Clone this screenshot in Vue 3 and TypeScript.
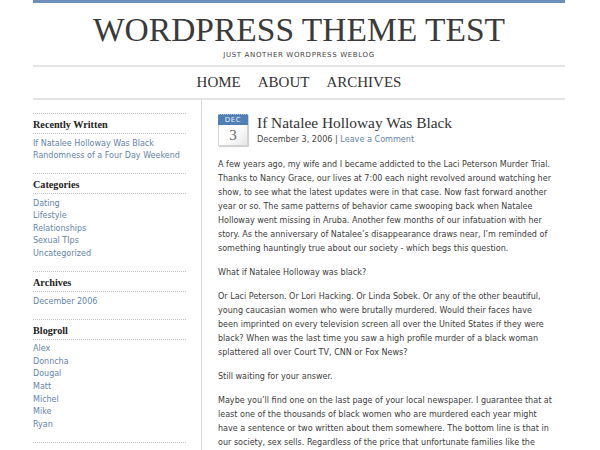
<script setup lang="ts">
interface Widget {
  title: string
  links: string[]
}

const nav = ['Home', 'About', 'Archives']

const widgets: Widget[] = [
  { title: 'Recently Written', links: ['If Natalee Holloway Was Black', 'Randomness of a Four Day Weekend'] },
  { title: 'Categories', links: ['Dating', 'Lifestyle', 'Relationships', 'Sexual TIps', 'Uncategorized'] },
  { title: 'Archives', links: ['December 2006'] },
  { title: 'Blogroll', links: ['Alex', 'Donncha', 'Dougal', 'Matt', 'Michel', 'Mike', 'Ryan'] },
  { title: 'Admin', links: ['Site Admin'] }
]

const paragraphs = [
  'A few years ago, my wife and I became addicted to the Laci Peterson Murder Trial. Thanks to Nancy Grace, our lives at 7:00 each night revolved around watching her show, to see what the latest updates were in that case. Now fast forward another year or so. The same patterns of behavior came swooping back when Natalee Holloway went missing in Aruba. Another few months of our infatuation with her story. As the anniversary of Natalee’s disappearance draws near, I’m reminded of something hauntingly true about our society - which begs this question.',
  'What if Natalee Holloway was black?',
  'Or Laci Peterson. Or Lori Hacking. Or Linda Sobek. Or any of the other beautiful, young caucasian women who were brutally murdered. Would their faces have been imprinted on every television screen all over the United States if they were black? When was the last time you saw a high profile murder of a black woman splattered all over Court TV, CNN or Fox News?',
  'Still waiting for your answer.',
  'Maybe you’ll find one on the last page of your local newspaper. I guarantee that at least one of the thousands of black women who are murdered each year might have a sentence or two written about them somewhere. The bottom line is that in our society, sex sells. Regardless of the price that unfortunate families like the'
]
</script>

<template>
  <div class="page">
    <header class="masthead">
      <h1>Wordpress Theme Test</h1>
      <p class="tagline">Just another WordPress weblog</p>
    </header>
    <nav class="nav">
      <a v-for="item in nav" :key="item" href="#">{{ item }}</a>
    </nav>
    <div class="columns">
      <aside class="sidebar">
        <section v-for="w in widgets" :key="w.title" class="widget">
          <h3>{{ w.title }}</h3>
          <ul>
            <li v-for="link in w.links" :key="link"><a href="#">{{ link }}</a></li>
          </ul>
        </section>
      </aside>
      <main class="post">
        <div class="post-head">
          <div class="calendar">
            <div class="cal-month">DEC</div>
            <div class="cal-day">3</div>
          </div>
          <div>
            <h2>If Natalee Holloway Was Black</h2>
            <p class="meta">December 3, 2006 | <a href="#">Leave a Comment</a></p>
          </div>
        </div>
        <p v-for="(text, i) in paragraphs" :key="i" class="para">{{ text }}</p>
      </main>
    </div>
  </div>
</template>

<style>
html, body {
  margin: 0;
  background: #fff;
  height: 450px;
  overflow: hidden;
}
</style>

<style scoped>
.page {
  width: 532px;
  margin-left: 33px;
  height: 447px;
  overflow: hidden;
  border-top: 3px solid #6a90bb;
  font-family: "DejaVu Sans", Verdana, sans-serif;
}

.masthead {
  height: 62px;
  text-align: center;
  border-bottom: 2px solid #e4e4e4;
}

.masthead h1 {
  margin: 0;
  padding-top: 10px;
  font: normal 33.5px/34px "Liberation Serif", serif;
  color: #3a3a3a;
  text-transform: uppercase;
}

.tagline {
  margin: 3px 0 0;
  font-size: 7px;
  line-height: 10px;
  letter-spacing: 0.65px;
  text-transform: uppercase;
  color: #444;
}

.nav {
  height: 31px;
  display: flex;
  justify-content: center;
  align-items: center;
  gap: 17px;
  border-bottom: 2px solid #e4e4e4;
}

.nav a {
  font: 15px "Liberation Serif", serif;
  color: #333;
  text-transform: uppercase;
  text-decoration: none;
}

.columns {
  display: flex;
}

.sidebar {
  width: 153px;
  padding-top: 13px;
  padding-right: 15px;
  flex: none;
}

.widget {
  border-top: 1px dotted #c4c4c4;
  margin-bottom: 10.5px;
}

.widget h3 {
  margin: 0;
  height: 19px;
  font: bold 10.2px/21px "Liberation Serif", serif;
  color: #222;
  border-bottom: 1px dotted #c4c4c4;
}

.widget ul {
  list-style: none;
  margin: 0;
  padding: 3.5px 0 0;
}

.widget li {
  font-size: 8px;
  line-height: 12.6px;
  white-space: nowrap;
}

.widget a, .meta a {
  color: #6484aa;
  text-decoration: none;
}

.post {
  flex: 1;
  border-left: 1px solid #d8d8d8;
  padding: 14px 12px 0 16px;
  height: 352px;
}

.post-head {
  display: flex;
  gap: 9px;
  margin-bottom: 12px;
}

.calendar {
  width: 28px;
  height: 31px;
  border: 1px solid #d4d4d4;
  border-top: 0;
  border-radius: 0 0 1px 1px;
  box-shadow: 1px 1px 1px #ccc;
  background: linear-gradient(135deg, #fff 55%, #e6e6e6);
  text-align: center;
  flex: none;
}

.cal-month {
  height: 11px;
  margin: 0 -1px;
  background: #4f7fb5;
  border-top: 1px dotted #a9c4df;
  box-sizing: border-box;
  color: #e6eef6;
  font-size: 7px;
  line-height: 10px;
  letter-spacing: 0.6px;
}

.cal-day {
  font: 15px/21px "Liberation Serif", serif;
  color: #666;
}

.post-head h2 {
  margin: 0;
  font: normal 15.4px/18px "Liberation Serif", serif;
  color: #333;
}

.meta {
  margin: 2px 0 0;
  font-size: 8.1px;
  line-height: 11px;
  color: #444;
}

.para {
  margin: 0 0 10px;
  font-size: 8.05px;
  line-height: 14px;
  color: #3c3c3c;
}
</style>
